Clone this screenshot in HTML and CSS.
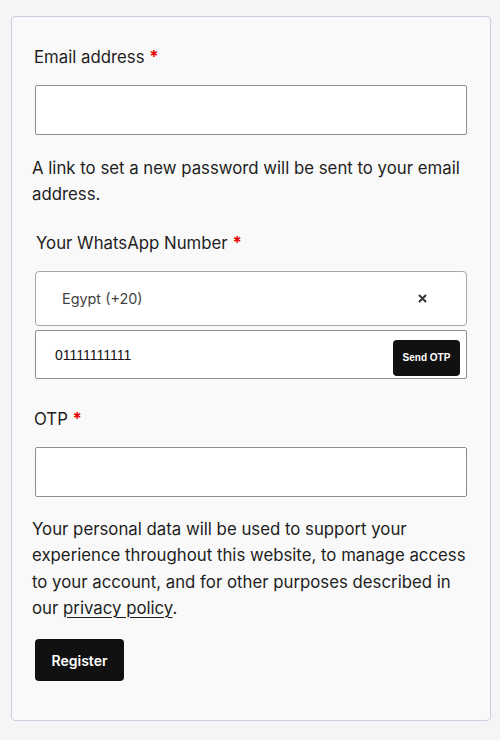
FILE: index.html
```html
<!DOCTYPE html>
<html lang="en">
<head>
<meta charset="utf-8">
<title>Register</title>
<link rel="stylesheet" href="styles.css">
</head>
<body>
<form class="card">
  <label class="label label-first">Email address <span class="req">*</span></label>
  <input class="field" type="email">
  <p class="note">A link to set a new password will be sent to your email address.</p>

  <label class="label label-wa">Your WhatsApp Number <span class="req">*</span></label>
  <div class="select">
    <span class="select-text">Egypt (+20)</span>
    <svg class="clear" width="9" height="9" viewBox="0 0 9 9"><path d="M1.5 1.5L7.5 7.5M7.5 1.5L1.5 7.5" stroke="#333" stroke-width="2" stroke-linecap="round"/></svg>
  </div>
  <div class="phone">
    <span class="phone-text">01111111111</span>
    <button type="button" class="otp-btn">Send OTP</button>
  </div>

  <label class="label label-otp">OTP <span class="req">*</span></label>
  <input class="field" type="text">

  <p class="privacy">Your personal data will be used to support your experience throughout this website, to manage access to your account, and for other purposes described in our <a href="#" class="link">privacy policy</a>.</p>

  <button type="button" class="register">Register</button>
</form>
</body>
</html>
```

FILE: styles.css
```css
html, body {
  margin: 0;
  padding: 0;
}
body {
  background: #f5f5f5;
  font-family: Inter, "Liberation Sans", sans-serif;
  color: #1e1e1e;
  padding: 16px 9px 0 11px;
  height: 740px;
  box-sizing: border-box;
}
.card {
  box-sizing: border-box;
  width: 480px;
  height: 705px;
  background: #f9f9f9;
  border: 1px solid #d2cbe0;
  border-radius: 4px;
  padding: 27px 23px 0 20px;
  display: flex;
  flex-direction: column;
  align-items: flex-start;
}
.label {
  font-size: 16.8px;
  line-height: 26px;
  padding-left: 2px;
}
.req {
  color: #e60000;
  font-weight: 700;
}
.field {
  box-sizing: border-box;
  margin: 15px 0 0 3px;
  width: 432px;
  height: 50px;
  background: #fff;
  border: 1px solid #8f8c9a;
  border-radius: 2px;
  padding: 0 16px;
  font: inherit;
}
.note {
  margin: 20px 0 0 0;
  font-size: 16.8px;
  line-height: 26px;
  width: 440px;
}
.label-wa {
  margin-top: 23px;
  padding-left: 4px;
}
.select {
  box-sizing: border-box;
  margin: 15px 0 0 3px;
  width: 432px;
  height: 55px;
  background: #fff;
  border: 1px solid #a9a6b2;
  border-radius: 4px;
  display: flex;
  align-items: center;
  justify-content: space-between;
  padding: 0 39px 0 26px;
}
.select-text {
  font-size: 14.4px;
  color: #444;
}
.phone {
  box-sizing: border-box;
  margin: 4px 0 0 3px;
  width: 432px;
  height: 49px;
  background: #fff;
  border: 1px solid #8f8c9a;
  border-radius: 2px;
  display: flex;
  align-items: center;
  justify-content: space-between;
  padding: 0 6px 0 19px;
}
.phone-text {
  font-family: "Liberation Sans", Arial, sans-serif;
  font-size: 14px;
  color: #111;
}
.otp-btn {
  margin-top: 6px;
  height: 36px;
  width: 67px;
  background: #111;
  color: #fff;
  border: none;
  border-radius: 4px;
  font-family: "Liberation Sans", Arial, sans-serif;
  font-size: 10px;
  font-weight: 700;
  padding: 0;
}
.label-otp {
  margin-top: 27px;
}
.privacy {
  margin: 19px 0 0 0;
  font-size: 16.8px;
  line-height: 26.3px;
  width: 440px;
}
.link {
  color: inherit;
  text-decoration: underline;
  text-underline-offset: 3px;
  text-decoration-thickness: 1px;
}
.register {
  margin: 18px 0 0 3px;
  width: 89px;
  height: 42px;
  background: #111;
  color: #fff;
  border: none;
  border-radius: 4px;
  font-family: Inter, "Liberation Sans", sans-serif;
  font-size: 14px;
  font-weight: 600;
  padding: 0;
}
```
